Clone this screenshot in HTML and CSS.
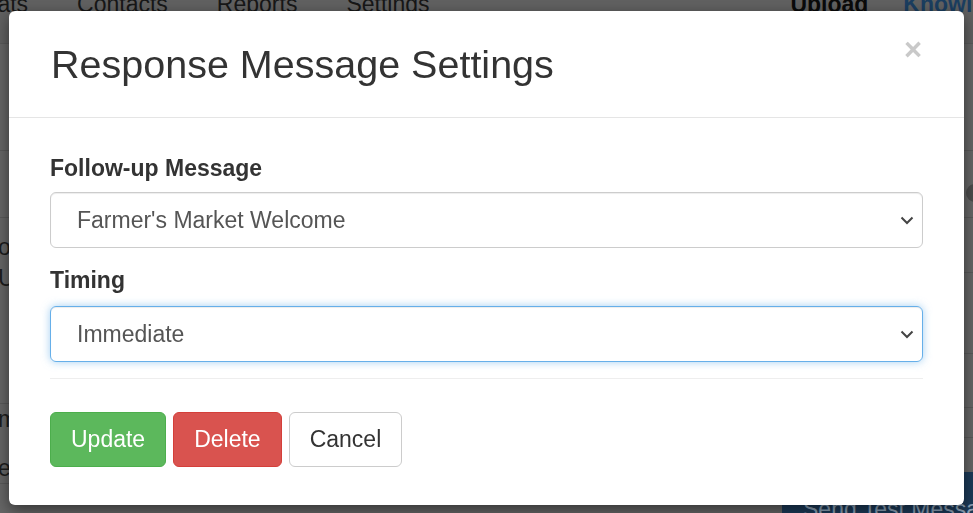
FILE: index.html
```html
<!DOCTYPE html>
<html lang="en">
<head>
<meta charset="utf-8">
<title>Response Message Settings</title>
<link rel="stylesheet" href="styles.css">
</head>
<body>
<div class="page">
  <nav class="nav">
    <div class="nav-left">
      <span class="nav-link first">Chats</span>
      <span class="nav-link">Contacts</span>
      <span class="nav-link">Reports</span>
      <span class="nav-link">Settings</span>
    </div>
    <div class="nav-right">
      <span class="nav-link strong">Upload</span>
      <span class="nav-link blue">Knowledge</span>
    </div>
  </nav>
  <div class="content">
    <div class="col-left">
      <div class="row r1"></div>
      <div class="row r2"></div>
      <div class="row r3">
        <div class="frag f-o">o</div>
        <div class="frag f-u">U</div>
      </div>
      <div class="row r4">
        <div class="frag f-m">m</div>
        <div class="frag f-el">el</div>
      </div>
    </div>
    <div class="col-right">
      <div class="row q1"></div>
      <div class="row q2"><span class="avatar"></span></div>
      <div class="row q3"></div>
      <div class="row q4"></div>
      <div class="row q5"></div>
      <div class="row q6"></div>
      <div class="row q7"></div>
      <div class="q8"><span class="send-btn">Send Test Message</span></div>
    </div>
  </div>
</div>

<div class="modal" role="dialog">
  <div class="modal-header">
    <h4 class="modal-title">Response Message Settings</h4>
    <span class="close">&times;</span>
  </div>
  <div class="modal-body">
    <div class="form-label">Follow-up Message</div>
    <div class="select">
      <span class="select-text">Farmer's Market Welcome</span>
      <svg class="chevron" width="14" height="9" viewBox="0 0 14 9"><path d="M1.5 1.5 L7 7 L12.5 1.5" fill="none" stroke="#444" stroke-width="2"/></svg>
    </div>
    <div class="form-label label-timing">Timing</div>
    <div class="select focused">
      <span class="select-text">Immediate</span>
      <svg class="chevron" width="14" height="9" viewBox="0 0 14 9"><path d="M1.5 1.5 L7 7 L12.5 1.5" fill="none" stroke="#444" stroke-width="2"/></svg>
    </div>
    <hr class="divider">
    <div class="actions">
      <button class="btn btn-success">Update</button>
      <button class="btn btn-danger">Delete</button>
      <button class="btn btn-default">Cancel</button>
    </div>
  </div>
</div>
</body>
</html>
```
FILE: styles.css
```css
html, body {
  margin: 0;
  padding: 0;
  width: 973px;
  height: 513px;
  overflow: hidden;
  background: #666666;
  font-family: "Liberation Sans", Arial, sans-serif;
}

.page {
  width: 973px;
  height: 513px;
  overflow: hidden;
  background: #666666;
}

.nav {
  height: 44px;
  box-sizing: border-box;
  display: flex;
  justify-content: space-between;
  background: #616161;
  border-bottom: 1px solid #5a5a5a;
  overflow: hidden;
}

.nav-left, .nav-right {
  display: flex;
  flex: none;
  margin-top: -11px;
  height: 30px;
}

.nav-left { gap: 49px; margin-left: -32px; }
.nav-right { gap: 35px; margin-right: -53px; }

.nav-link {
  font-size: 23px;
  line-height: 30px;
  color: #171717;
  white-space: nowrap;
}
.nav-link.strong { font-weight: bold; color: #0a0a0a; }
.nav-link.blue { font-weight: bold; color: #1b3e60; }

.content {
  display: flex;
  height: 469px;
}

.col-left { flex: none; width: 480px; }
.col-right { flex: none; width: 493px; }

.row {
  box-sizing: border-box;
  border-bottom: 1px solid #595959;
}

.r1 { height: 107px; }
.r2 { height: 67px; }
.r3 { height: 186px; padding-top: 14px; }
.r4 { padding-top: 0; }

.frag {
  font-size: 23px;
  line-height: 30px;
  color: #1c1c1c;
  margin-left: -2px;
}
.f-u { margin-top: 1px; }
.f-el { margin-top: 19px; }

.q1 { height: 107px; }
.q2 { height: 67px; position: relative; }
.q3 { height: 55px; }
.q4 { height: 81px; }
.q5 { height: 54px; }
.q6 { height: 30px; }
.q7 { height: 34px; border-bottom: none; }

.avatar {
  position: absolute;
  left: 486px;
  top: 33px;
  width: 18px;
  height: 18px;
  border-radius: 50%;
  background: #4c4c4c;
}

.q8 { padding-left: 302px; }
.send-btn {
  display: block;
  width: 260px;
  height: 42px;
  box-sizing: border-box;
  padding: 22px 0 0 21px;
  background: #1c3a58;
  color: #8ea3b8;
  font-size: 23px;
  line-height: 30px;
  white-space: nowrap;
  overflow: hidden;
}

/* modal */
.modal {
  position: fixed;
  left: 9px;
  top: 11px;
  width: 955px;
  background: #fff;
  border-radius: 6px;
  box-shadow: 0 5px 15px rgba(0, 0, 0, 0.5);
  color: #333;
}

.modal-header {
  display: flex;
  justify-content: space-between;
  padding: 31px 42px 31px 42px;
  border-bottom: 1px solid #e5e5e5;
}

.modal-title {
  margin: 0;
  font-size: 39.5px;
  line-height: 44px;
  font-weight: normal;
  color: #333;
}

.close {
  font-size: 31px;
  line-height: 31px;
  font-weight: bold;
  color: #c9c9c9;
  margin-top: -8px;
}

.modal-body {
  padding: 35px 41px 38px 41px;
}

.form-label {
  font-size: 23px;
  line-height: 30px;
  font-weight: bold;
  color: #333;
  margin-bottom: 9px;
}

.label-timing { margin-bottom: 11px; }

.select {
  height: 56px;
  box-sizing: border-box;
  border: 1px solid #ccc;
  border-radius: 6px;
  display: flex;
  align-items: center;
  justify-content: space-between;
  padding: 0 8px 0 26px;
  margin-bottom: 17px;
  box-shadow: inset 0 1px 1px rgba(0, 0, 0, 0.075);
}

.select.focused {
  border-color: #66afe9;
  box-shadow: inset 0 1px 1px rgba(0, 0, 0, 0.075), 0 0 8px rgba(102, 175, 233, 0.6);
  margin-bottom: 0;
}

.select-text {
  font-size: 23px;
  color: #555;
}

.chevron { display: block; }

.divider {
  border: 0;
  border-top: 1px solid #eee;
  margin: 16px 0 33px 0;
}

.actions {
  display: flex;
  gap: 7px;
}

.btn {
  height: 55px;
  box-sizing: border-box;
  padding: 0 20px;
  font-family: "Liberation Sans", Arial, sans-serif;
  font-size: 23px;
  border-radius: 6px;
  border: 1px solid transparent;
  cursor: pointer;
}

.btn-success { background: #5cb85c; border-color: #4cae4c; color: #fff; }
.btn-danger { background: #d9534f; border-color: #d43f3a; color: #fff; }
.btn-default { background: #fff; border-color: #ccc; color: #333; }
```
